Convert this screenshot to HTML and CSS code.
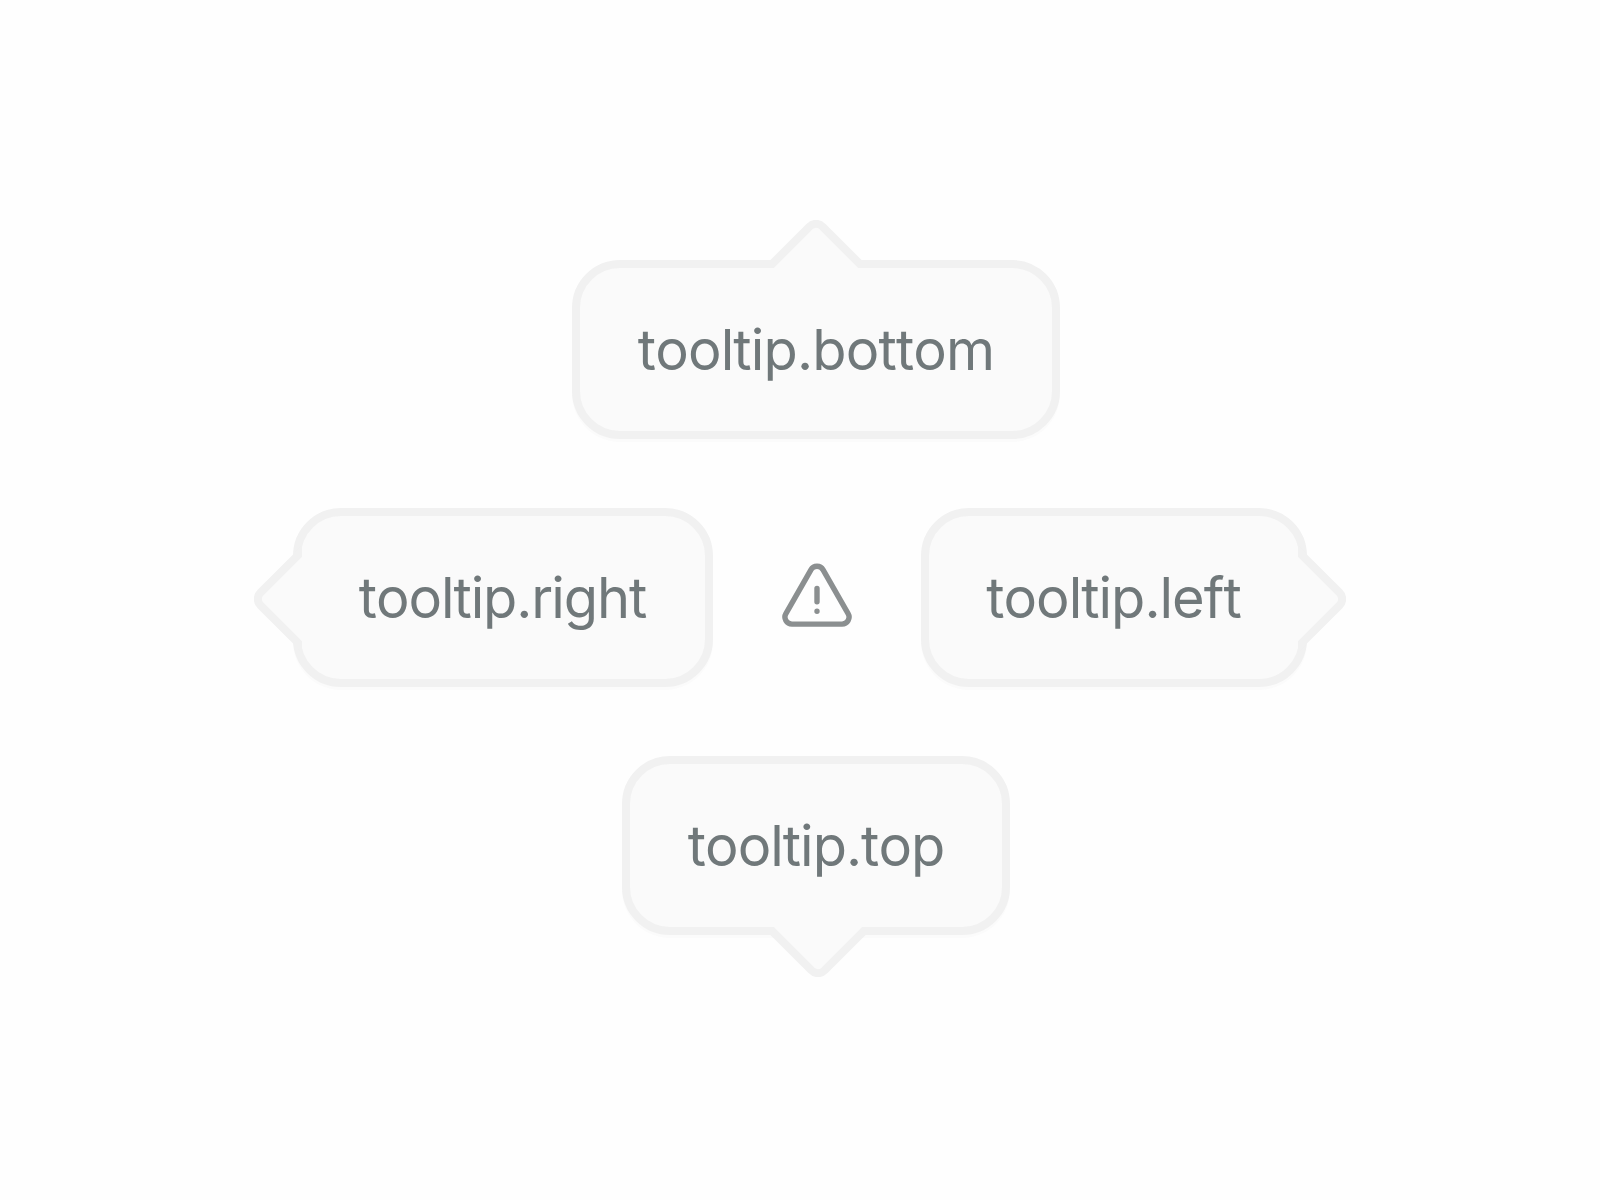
FILE: index.html
```html
<!DOCTYPE html>
<html>
<head>
  <meta charset="utf-8">
  <title>Tooltip</title>
  <link rel="stylesheet" href="styles.css">
</head>
<body>
  <svg class="defs" width="0" height="0">
    <symbol id="arrow">
      <path d="M4 50.2L47.6 6.5A9 9 0 0 1 60.4 6.5L104 50.2"/>
    </symbol>
  </svg>
  <div class="stage">
    <div class="tooltip bottom">
      <span>tooltip.bottom</span>
      <svg class="arrow"><use href="#arrow"/></svg>
    </div>
    <div class="row">
      <div class="tooltip right">
        <span>tooltip.right</span>
        <svg class="arrow"><use href="#arrow"/></svg>
      </div>
      <svg class="icon" viewBox="0 0 72 66">
        <path d="M29.9 7.8L4.9 51.6A7 7 0 0 0 11 62.1H61A7 7 0 0 0 67.1 51.6L42.1 7.8A7 7 0 0 0 29.9 7.8Z"/>
        <path d="M36 26.5V39.8M36 49.2V49.3"/>
      </svg>
      <div class="tooltip left">
        <span>tooltip.left</span>
        <svg class="arrow"><use href="#arrow"/></svg>
      </div>
    </div>
    <div class="tooltip top">
      <span>tooltip.top</span>
      <svg class="arrow"><use href="#arrow"/></svg>
    </div>
  </div>
</body>
</html>
```
FILE: styles.css
```css
body {
  margin: 0;
  background: #fefefe;
}
.defs {
  position: absolute;
}
.stage {
  box-sizing: border-box;
  height: 1200px;
  padding-top: 260px;
  display: flex;
  flex-direction: column;
  align-items: center;
  gap: 69px;
  padding-left: 32px;
}
.row {
  display: flex;
  align-items: center;
  margin-left: -32px;
}
.tooltip {
  position: relative;
  box-sizing: border-box;
  height: 179px;
  border: 8px solid #f1f1f1;
  border-radius: 48px;
  background: #fafafa;
  box-shadow: 0 3px 0 #fbfbfb;
  color: #70787a;
  font: 400 56px/165px Inter, sans-serif;
  font-kerning: none;
  letter-spacing: -1px;
  text-align: center;
  white-space: nowrap;
}
.bottom {
  width: 488px;
  letter-spacing: -0.85px;
}
.right {
  width: 420px;
  padding-right: 1px;
  letter-spacing: -1.1px;
}
.left {
  width: 386px;
  padding-right: 1px;
}
.top {
  width: 388px;
}
.icon {
  width: 72px;
  height: 66px;
  margin: -5px 68px 0;
  fill: none;
  stroke: #8b8f90;
  stroke-width: 5.4;
  stroke-linecap: round;
}
.arrow {
  position: absolute;
  width: 108px;
  height: 48px;
  fill: #fafafa;
  stroke: #f1f1f1;
  stroke-width: 8;
}
.bottom .arrow {
  top: -48px;
  left: 182px;
}
.right .arrow {
  top: 59px;
  left: -77px;
  transform: rotate(-90deg);
}
.left .arrow {
  top: 59px;
  right: -77px;
  transform: rotate(90deg);
}
.top .arrow {
  bottom: -50px;
  left: 134px;
  height: 50px;
  transform: rotate(180deg);
}
```
